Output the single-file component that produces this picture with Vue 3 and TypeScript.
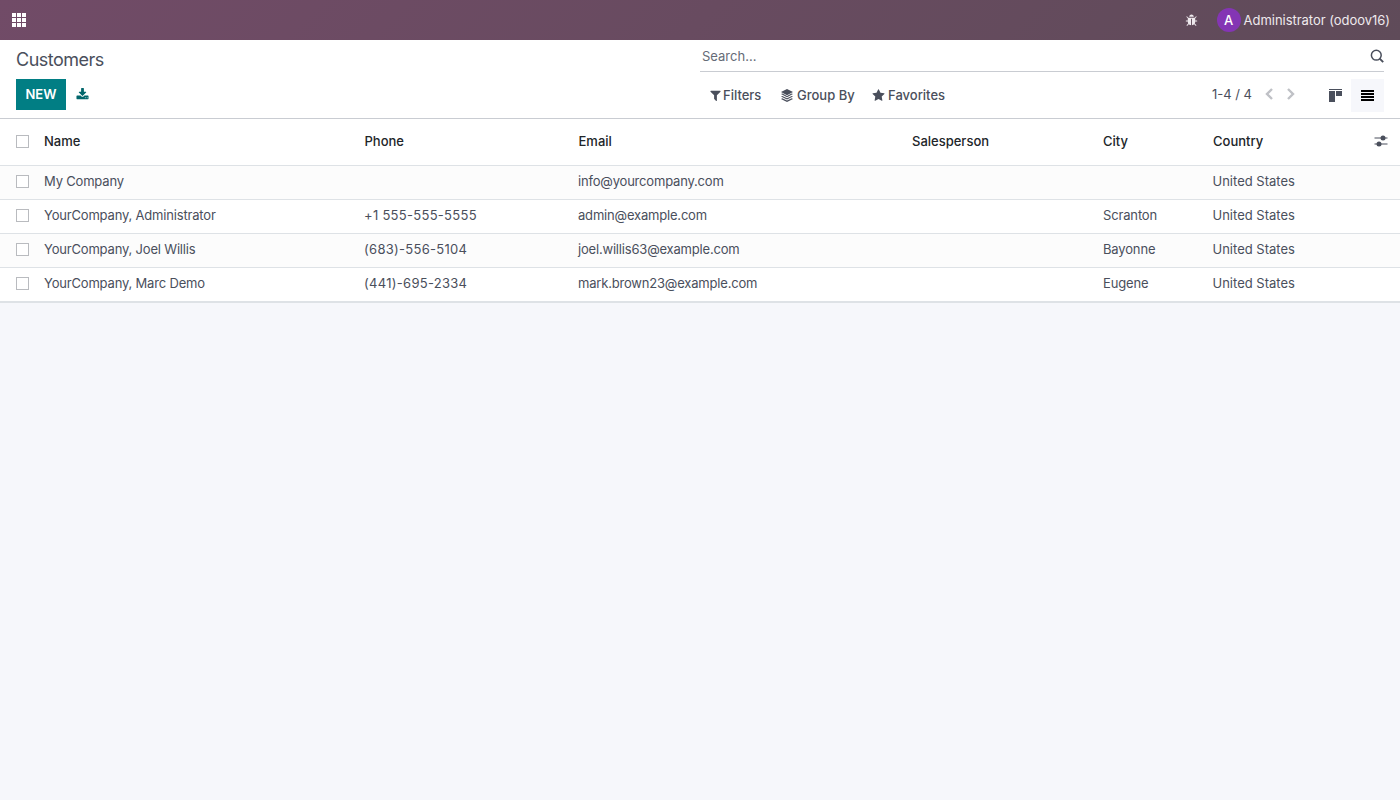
<script setup lang="ts">
interface Row {
  name: string
  phone: string
  email: string
  salesperson: string
  city: string
  country: string
}

const headers = ['Name', 'Phone', 'Email', 'Salesperson', 'City', 'Country']

const rows: Row[] = [
  { name: 'My Company', phone: '', email: 'info@yourcompany.com', salesperson: '', city: '', country: 'United States' },
  { name: 'YourCompany, Administrator', phone: '+1 555-555-5555', email: 'admin@example.com', salesperson: '', city: 'Scranton', country: 'United States' },
  { name: 'YourCompany, Joel Willis', phone: '(683)-556-5104', email: 'joel.willis63@example.com', salesperson: '', city: 'Bayonne', country: 'United States' },
  { name: 'YourCompany, Marc Demo', phone: '(441)-695-2334', email: 'mark.brown23@example.com', salesperson: '', city: 'Eugene', country: 'United States' },
]
</script>

<template>
  <div class="app">
    <header class="navbar">
      <div class="apps"><i v-for="n in 9" :key="n"></i></div>
      <div class="systray">
        <svg class="bug" width="13" height="13" viewBox="0 0 1792 1792" fill="currentColor">
          <path d="M1696 960q0 26-19 45t-45 19h-224q0 171-67 290l208 209q19 19 19 45t-19 45q-18 19-45 19t-45-19l-198-197q-5 5-15 13t-42 28.5-65 36.5-82 29-97 13v-896h-128v896q-51 0-101.5-13.5t-87-33-66-39-43.5-32.5l-15-14-183 207q-20 21-48 21-24 0-43-16-19-18-20.5-44.5t15.5-46.5l202-227q-58-114-58-274h-224q-26 0-45-19t-19-45 19-45 45-19h224v-294l-173-173q-19-19-19-45t19-45 45-19 45 19l173 173h844l173-173q19-19 45-19t45 19 19 45-19 45l-173 173v294h224q26 0 45 19t19 45zm-480-576h-640q0-133 93.5-226.5t226.5-93.5 226.5 93.5 93.5 226.5z" />
        </svg>
        <span class="avatar">A</span>
        <span class="user">Administrator (odoov16)</span>
      </div>
    </header>

    <section class="panel">
      <div class="left">
        <h1 class="title">Customers</h1>
        <div class="actions">
          <button class="new">NEW</button>
          <svg class="export" width="13" height="13" viewBox="0 0 1792 1792" fill="currentColor">
            <path d="M1344 1344q0-26-19-45t-45-19-45 19-19 45 19 45 45 19 45-19 19-45zm256 0q0-26-19-45t-45-19-45 19-19 45 19 45 45 19 45-19 19-45zm128-224v320q0 40-28 68t-68 28h-1472q-40 0-68-28t-28-68v-320q0-40 28-68t68-28h465l135 136q58 56 136 56t136-56l136-136h464q40 0 68 28t28 68zm-325-569q17 41-14 70l-448 448q-18 19-45 19t-45-19l-448-448q-31-29-14-70 17-39 59-39h256v-448q0-26 19-45t45-19h256q26 0 45 19t19 45v448h256q42 0 59 39z" />
          </svg>
        </div>
      </div>
      <div class="right">
        <div class="search">
          <span class="placeholder">Search...</span>
          <svg width="14" height="14" viewBox="0 0 14 14" fill="none" stroke="currentColor">
            <circle cx="6.3" cy="6.2" r="4.9" stroke-width="1.5" />
            <path d="M9.7 9.6L13.2 13.1" stroke-width="1.9" />
          </svg>
        </div>
        <div class="tools">
          <div class="filters">
            <span class="tool filter">
              <svg width="13" height="13" viewBox="0 0 1792 1792" fill="currentColor"><path d="M1595 295q17 41-14 70l-493 493v742q0 42-39 59-13 5-25 5-27 0-45-19l-256-256q-19-19-19-45v-486l-493-493q-31-29-14-70 17-39 59-39h1280q42 0 59 39z" /></svg>
              <b>Filters</b>
            </span>
            <span class="tool group">
              <svg width="12" height="13" viewBox="0 0 12 13" fill="currentColor">
                <path d="M6 0L12 3L6 6.2L0 3Z" />
                <path d="M0 5L1.5 4.5L6 6.9L10.5 4.5L12 5L6 8.3ZM0 7.6L1.3 6.9L6 9.3L10.7 6.9L12 7.6L6 10.6ZM0 9.9L1.3 9.2L6 11.6L10.7 9.2L12 9.9L6 13Z" />
              </svg>
              <b>Group By</b>
            </span>
            <span class="tool fav">
              <svg width="13" height="13" viewBox="0 0 1792 1792" fill="currentColor"><path d="M1728 647q0 22-26 48l-363 354 86 500q1 7 1 20 0 21-10.5 35.5t-30.5 14.5q-19 0-40-12l-449-236-449 236q-22 12-40 12-21 0-31.5-14.5t-10.5-35.5q0-6 2-20l86-500-364-354q-25-27-25-48 0-37 56-46l502-73 225-455q19-41 49-41t49 41l225 455 502 73q56 9 56 46z" /></svg>
              <b>Favorites</b>
            </span>
          </div>
          <div class="pager">
            <span class="count">1-4 / 4</span>
            <svg class="prev" width="8" height="12" viewBox="0 0 8 12"><path d="M7 1L2 6L7 11" /></svg>
            <svg class="next" width="8" height="12" viewBox="0 0 8 12"><path d="M1 1L6 6L1 11" /></svg>
            <span class="view kanban">
              <svg width="13" height="13" viewBox="0 0 13 13" fill="#4a4f5c"><path d="M0 0h13v1H0zM0 2h6v11H0zM7 2h6v5H7z" /></svg>
            </span>
            <span class="view active">
              <svg width="13" height="11" viewBox="0 0 13 11" fill="#000"><path d="M0 0h13v2H0zM0 3h13v2H0zM0 6h13v2H0zM0 9h13v2H0z" /></svg>
            </span>
          </div>
        </div>
      </div>
    </section>

    <main class="list">
      <div class="row head">
        <span class="check"></span>
        <span v-for="h in headers" :key="h" class="cell">{{ h }}</span>
        <svg class="adjust" width="14" height="12" viewBox="0 0 14 12" fill="currentColor">
          <path d="M.5 2.5h13v1H.5zM.5 8.5h13v1H.5z" /><circle cx="9" cy="3" r="2.5" /><circle cx="5" cy="9" r="2.5" />
        </svg>
      </div>
      <div v-for="row in rows" :key="row.name" class="row data">
        <span class="check"></span>
        <span class="cell name">{{ row.name }}</span>
        <span class="cell phone">{{ row.phone }}</span>
        <span class="cell email">{{ row.email }}</span>
        <span class="cell salesperson">{{ row.salesperson }}</span>
        <span class="cell city">{{ row.city }}</span>
        <span class="cell country">{{ row.country }}</span>
      </div>
    </main>
  </div>
</template>

<style>
body { margin: 0; }
</style>

<style scoped>
.app { height: 800px; overflow: hidden; background: #f6f7fb; color: #4a4f5c; font: 13px/20px Inter, "Liberation Sans", sans-serif; }
.app * { box-sizing: border-box; }
svg { display: block; flex: none; }
.navbar { height: 40px; padding: 0 10px 0 12px; display: flex; align-items: center; justify-content: space-between; background: linear-gradient(135deg, #714b67, #5f4b59); color: #eee9ed; }
.apps { display: grid; grid-template-columns: repeat(3, 4px); grid-auto-rows: 4px; gap: 1px; }
.apps i { background: #fff; }
.systray { display: flex; align-items: center; }
.avatar { width: 24px; height: 24px; margin-left: 19px; border-radius: 50%; background: #8435b4; color: #fff; text-align: center; line-height: 24px; font-weight: 500; }
.user { margin-left: 3px; white-space: nowrap; letter-spacing: -0.03px; }
.panel { height: 79px; display: flex; background: #fff; border-bottom: 1px solid #c9ccd2; }
.left { width: 700px; padding-left: 16px; }
.title { margin: 8px 0 0; font-size: 18px; line-height: 24px; font-weight: 400; letter-spacing: -0.5px; }
.actions { display: flex; align-items: center; margin-top: 7px; }
.new { width: 50px; height: 31px; padding: 0; border: 0; background: #017e84; color: #fff; font: 600 13px/31px Inter, sans-serif; }
.export { margin-left: 10px; color: #01666b; }
.right { width: 684px; }
.search { height: 32px; padding: 0 0 0 2px; display: flex; align-items: center; justify-content: space-between; border-bottom: 1px solid #c9ccd2; }
.placeholder { color: #666b77; }
.tools { display: flex; justify-content: space-between; align-items: center; height: 33px; margin-top: 7px; }
.filters, .pager, .tool { display: flex; align-items: center; }
.filters { padding-bottom: 1px; }
.tool b { font-weight: 500; white-space: nowrap; }
.filter { width: 72px; padding-left: 9px; gap: 1px; }
.group { width: 92px; padding-left: 9px; gap: 4px; }
.fav { padding-left: 8px; gap: 3px; }
.count { padding-bottom: 3px; }
.prev, .next { fill: none; stroke: #bfc1c6; stroke-width: 2.4; margin-bottom: 4px; }
.prev { margin-left: 13px; }
.next { margin-left: 14px; margin-right: 23px; }
.view { width: 33px; height: 33px; display: flex; align-items: center; justify-content: center; }
.kanban { padding-left: 1px; }
.active { background: #f6f7fb; }
.list { background: #fff; border-bottom: 1px solid #dee2e6; }
.row { height: 34px; padding: 0 12px 2px 16px; display: grid; grid-template-columns: 28px 320px 214px 334px 191px 109.5px 1fr; align-items: center; border-bottom: 1px solid #dee2e6; }
.head { height: 47px; grid-template-columns: 28px 320.5px 214px 333.5px 191px 110px 1fr 14px; color: #212529; font-weight: 500; }
.data:nth-child(even) { background: #fcfcfc; }
.check { width: 13px; height: 13px; border: 1px solid #b9bbbf; background: #fff; }
.cell { white-space: nowrap; }
.data .cell { padding-bottom: 1px; }
.name { letter-spacing: -0.18px; }
.phone { letter-spacing: 0.29px; }
.email { letter-spacing: -0.19px; }
.city { letter-spacing: -0.15px; }
.adjust { color: #4a4f5c; }
</style>
